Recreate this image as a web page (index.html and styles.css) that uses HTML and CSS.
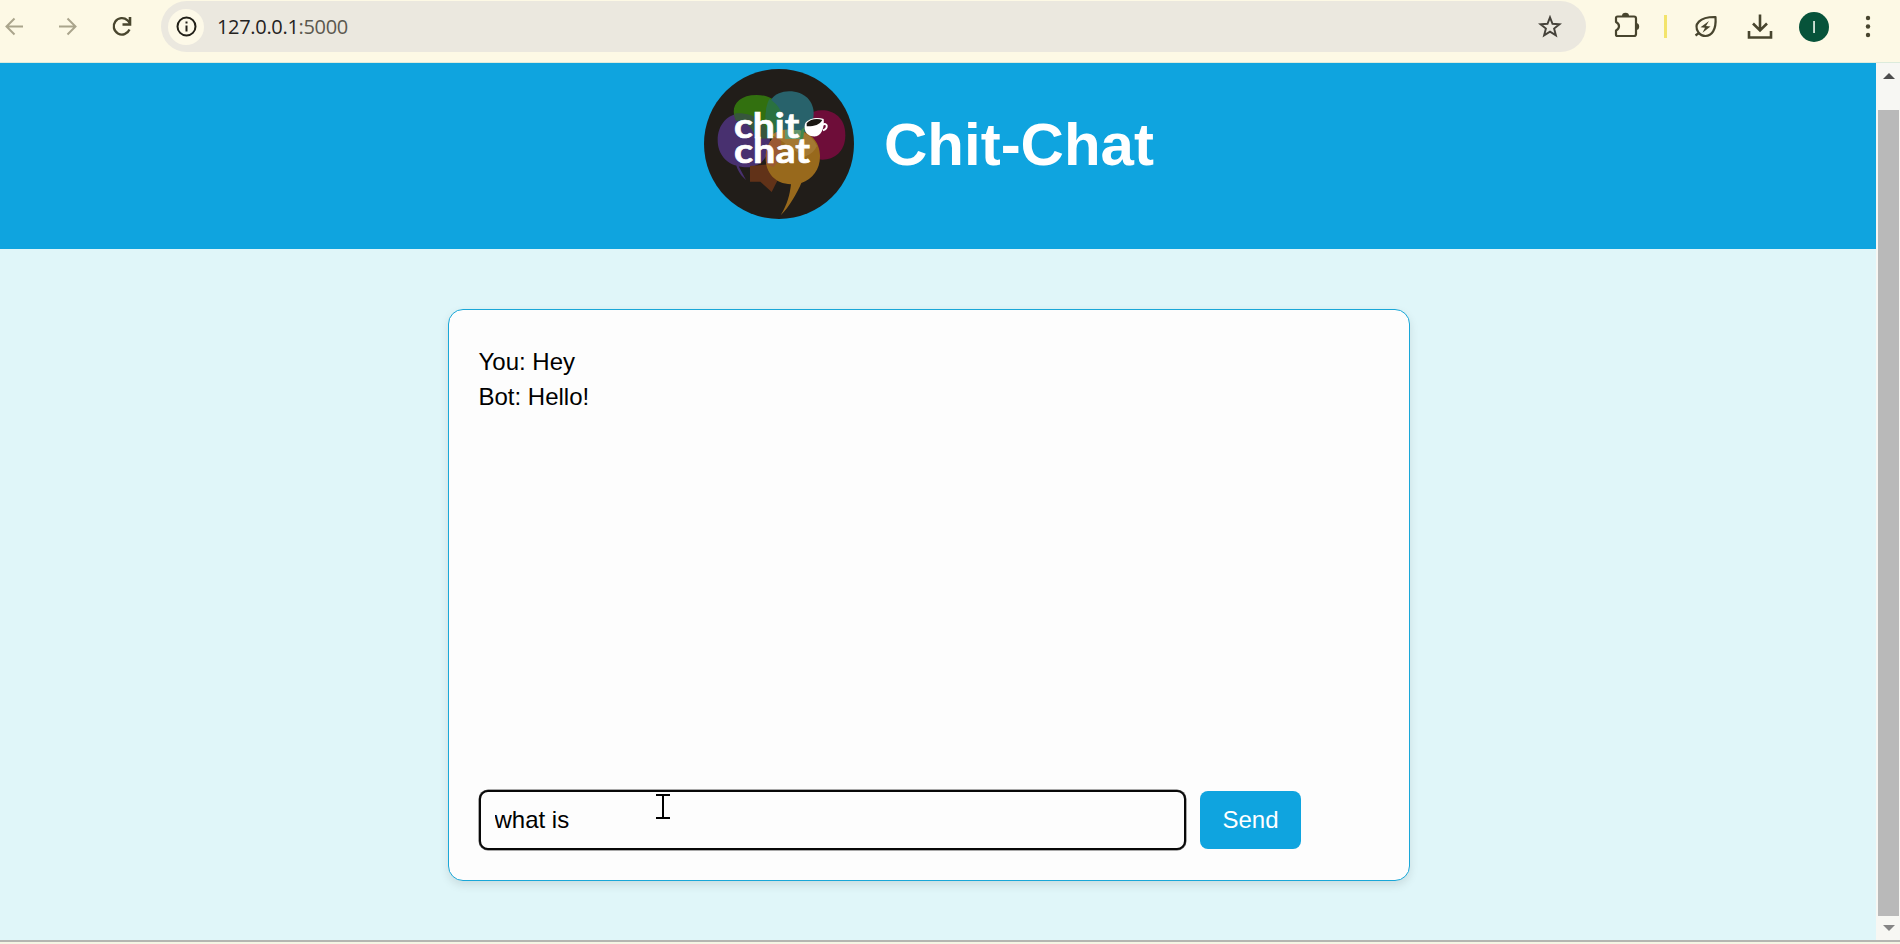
FILE: index.html
```html
<!DOCTYPE html>
<html lang="en">
<head>
<meta charset="utf-8">
<title>Chit-Chat</title>
<link rel="stylesheet" href="styles.css">
</head>
<body>
<div class="browser">
  <div class="toolbar">
    <svg class="nav-icons" viewBox="0 0 160 62" fill="none">
      <g stroke="#aaa58c" stroke-width="2"><path d="M23 26.500H7M14.500 18.500L6.500 26.500l8 8"/><path d="M59 26.500h16M67.500 18.500l8 8-8 8"/></g>
      <path d="M129.500 29.500a8.200 8.200 0 1 1-2-9.200l2.300 2.600" stroke="#49462e" stroke-width="2.300"/><path d="M130 17v7.500h-7.500" stroke="#49462e" stroke-width="2.600"/>
    </svg>
    <div class="address">
      <span class="site-info"><svg viewBox="0 0 36 36" width="36" height="36"><circle cx="18.500" cy="17.500" r="9" fill="none" stroke="#222018" stroke-width="2"/><path d="M17.500 16.500h2v6h-2zM17.500 12.500h2v2h-2z" fill="#222018"/></svg></span>
      <span class="url"><b>127.0.0.1</b>:5000</span>
      <svg class="star" viewBox="0 0 24 24"><path d="M12 2.300l2.500 6.500 7 .4-5.400 4.400 1.800 6.800-5.900-3.800-5.900 3.800 1.800-6.800-5.400-4.400 7-.4z" fill="none" stroke="#45423a" stroke-width="1.900"/></svg>
    </div>
    <svg class="tools" viewBox="1586 0 314 62" width="314" height="62">
      <g fill="none" stroke="#48452e" stroke-width="2.200" stroke-linejoin="round">
        <path d="M1617.500 16.500h16.500q2 0 2 2v15.500q0 2-2 2h-16.500q-1.500 0-1.500-1.500v-4q3-1.500 3-4.200t-3-4.200v-4q0-1.600 1.500-1.600z"/>
        <path d="M1698.500 32.500c-5.500-8 1-15.800 17-15.500 1 13-4 19-10 19-3 0-5.500-1.500-7-3.500zM1695.500 35.500l4-3"/>
        <path d="M1760 14.500v16M1753 23.500l7 7 7-7M1749 31v6.500h22V31" stroke-width="2.600" stroke-linejoin="miter"/>
      </g>
      <path d="M1622 16a3.500 3.200 0 0 1 7 0zM1636 23a3.200 3.500 0 0 1 0 7z" fill="#48452e"/>
      <path d="M1709 21l-8.500 6.200 4.500.5-2.500 5 8-6.200-4.500-.5z" fill="#48452e"/>
      <path d="M1664 15h3v23h-3z" fill="#f3e46c"/>
      <circle cx="1814" cy="27" r="15" fill="#07533a"/><path d="M1813.200 21h1.700v12h-1.700z" fill="#e4f0e6"/>
      <g fill="#48452e"><circle cx="1868" cy="18" r="2.200"/><circle cx="1868" cy="26.500" r="2.200"/><circle cx="1868" cy="35" r="2.200"/></g>
    </svg>
  </div>
  <div class="viewport">
    <div class="page">
      <header class="hero">
        <svg class="logo" viewBox="42 42 450 450">
          <circle cx="267" cy="267" r="225" fill="#211d19"/>
          <path d="M350 182c34-30 116-22 116 59 0 76-80 91-116 54z" fill="#6e0d39"/>
          <path d="M144 330l24 45c-12-10-25-25-31-50zM155 174c40-3 85 28 85 75 0 75-45 92-82 87-50-5-75-40-75-80 0-48 30-79 72-82z" fill="#48306f"/>
          <path d="M139 197c-20-35-2-77 61-77 38 0 68 17 76 55l-8 75h-70c-10-35-28-50-59-53z" fill="#32700f"/>
          <path d="M139 197c-4-7-6-16-6-21 25-4 58 4 75 18 15 13 27 30 28 56h-38c-10-35-28-50-59-53z" fill="#37563d"/>
          <path d="M297 109c48 0 74 31 74 66 0 38-25 78-80 78-45 0-63-29-64-68 0-42 25-76 70-76z" fill="#28626b"/>
          <path d="M238 132c18 10 34 28 38 50-3 26-11 40-23 54-20-18-26-35-26-51 0-24 4-40 11-53z" fill="#2a7140"/>
          <path d="M180 333l55-5 30 43-20 40-34-31h-31z" fill="#613218"/>
          <path d="M309 225c50 0 81 35 81 78 0 41-22 69-56 81-13 30-35 70-62 97 20-33 27-60 31-93-49-2-76-35-76-79 0-50 35-84 82-84z" fill="#98691c"/>
          <path d="M229 327l-1-35c5-25 18-45 37-56 17 28 10 75-15 100z" fill="#9a5933"/>
          <path d="M245 240c25-20 65-20 94-8 20 10 34 23 42 41-10 20-24 27-39 33l-70-50z" fill="#a47832"/>
          <path d="M285 225h47v27h-47z" fill="#62966c"/>
          <path d="M334 224l10-9-4 32-12 20z" fill="#3f874d"/>
          <g class="logo-text"><text x="132" y="248" textLength="196" lengthAdjust="spacingAndGlyphs">chit</text><text x="132" y="324" textLength="228" lengthAdjust="spacingAndGlyphs">chat</text></g>
          <path d="M398 209c14-8 18 11 1 17" fill="none" stroke="#fff" stroke-width="6"/>
          <path d="M345 206c10-16 38-20 56-14 2 22-3 45-22 52-24 2-40-12-34-38z" fill="#fff"/>
          <path d="M350 205c10-13 32-16 47-10-8 15-28 20-47 19z" fill="#191612"/>
        </svg>
        <h1>Chit-Chat</h1>
      </header>
      <main class="chat">
        <div class="messages"><div>You: Hey</div><div>Bot: Hello!</div></div>
        <div class="composer">
          <input type="text" value="what is" aria-label="Message">
          <button>Send</button>
        </div>
      </main>
      <svg class="pointer" viewBox="0 0 14 25"><path d="M0 1h14M7 1v23M0 24h14" fill="none" stroke="#000" stroke-width="2"/></svg>
    </div>
    <div class="scrollbar"><i class="up"></i><div class="thumb"></div><i class="down"></i></div>
  </div>
  <div class="bottom-edge"></div>
</div>
</body>
</html>
```
FILE: styles.css
```css
* { box-sizing: border-box; }
body { margin: 0; overflow: hidden; font-family: "Liberation Sans", Arial, sans-serif; color: #000; }
.browser { width: 1900px; height: 944px; display: flex; flex-direction: column; }
.toolbar { height: 63px; flex: none; display: flex; background: #fdf9e5; border-bottom: 1px solid #dcebdc; }
.nav-icons { width: 160px; height: 62px; flex: none; }
.address { width: 1425px; height: 51px; margin: 1px 0 0 1px; flex: none; display: flex; align-items: center; border-radius: 26px; background: #ebe8df; padding: 0 24px 0 7px; }
.site-info { width: 36px; height: 36px; flex: none; border-radius: 50%; background: #fdf9e8; }
.url { margin-left: 13px; font: 20px "Open Sans", sans-serif; letter-spacing: -.32px; color: #5b584f; white-space: nowrap; }
.url b { font-weight: 400; color: #24221e; }
.star { width: 24px; height: 24px; margin-left: auto; }
.tools { flex: none; }
.viewport { height: 877px; flex: none; display: flex; }
.page { width: 1876px; position: relative; background: #e0f6f9; }
.hero { height: 186px; padding: 6px 0 0 704px; display: flex; background: #0fa4df; }
.logo { width: 150px; height: 150px; flex: none; }
.logo-text { font: 700 104px Lato, sans-serif; fill: #fff; stroke: #fff; stroke-width: 2px; }
h1 { margin: 1px 0 0 30px; font-size: 60px; line-height: 150px; color: #fff; }
.chat { width: 962px; height: 572px; margin: 60px 0 0 448px; padding: 34px 30px 30px; display: flex; flex-direction: column; justify-content: space-between; background: #fdfdfd; border: 1px solid #19a7d8; border-radius: 15px; box-shadow: 0 4px 10px rgba(0,0,0,.1); }
.messages { margin-left: -.5px; font-size: 24px; line-height: 35px; }
.composer { display: flex; gap: 14px; align-items: center; }
input { width: 707px; height: 60px; padding: 0 13.5px; font: 24px "Liberation Sans", Arial, sans-serif; background: #fdfdfd; border: 2px solid #080808; border-radius: 9px; box-shadow: 0 0 0 .5px #555; outline: 0; color: #000; }
button { width: 101px; height: 58px; padding: 0; border: 0; border-radius: 8px; background: #0fa4df; color: #fff; font: 24px "Liberation Sans", Arial, sans-serif; }
.pointer { position: absolute; left: 656px; top: 731px; width: 14px; height: 25px; }
.scrollbar { width: 24px; padding: 0 1px 0 2px; display: flex; flex-direction: column; align-items: center; background: #f7f7f3; }
.thumb { width: 21px; height: 806px; background: #b9b9b9; }
.up, .down { width: 0; height: 0; border: 6px solid transparent; }
.up { margin: 4px 0 31px; border-bottom-color: #4d4d4d; }
.down { margin-top: 9px; border-top-color: #858585; }
.bottom-edge { height: 4px; background: #f5f5e4; border-top: 2px solid #b5b5b1; }
```
